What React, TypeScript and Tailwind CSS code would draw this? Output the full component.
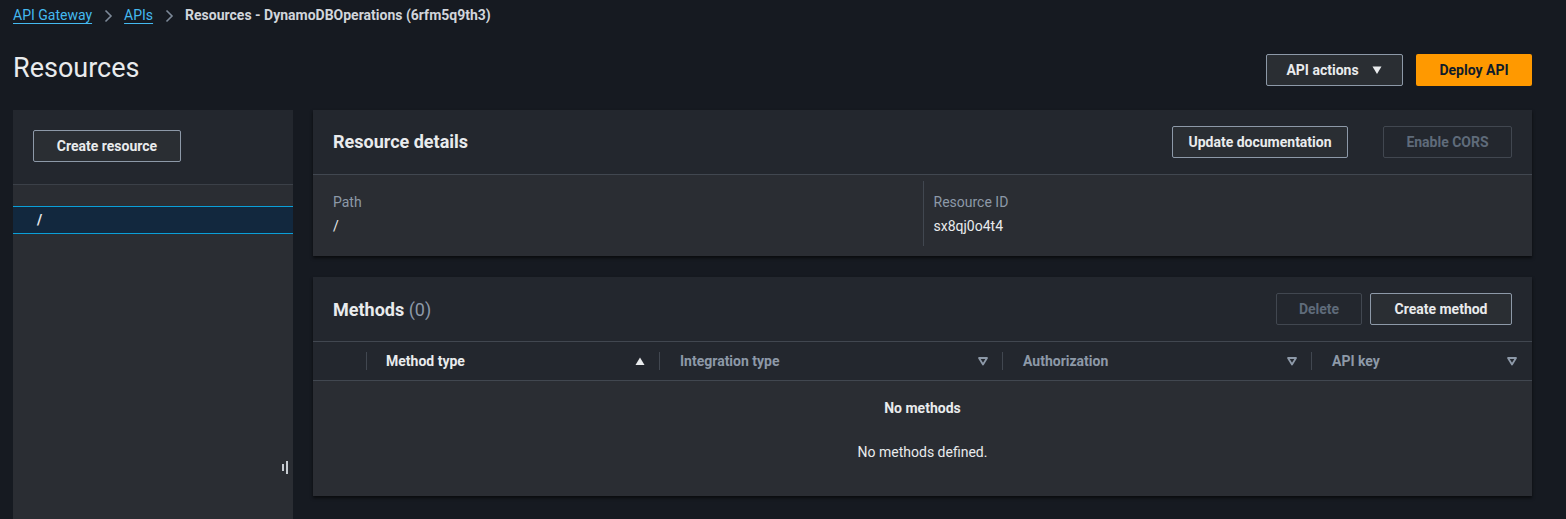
import React from "react";

const font = { fontFamily: "Roboto, 'Liberation Sans', sans-serif" };

function Chevron() {
    return (
        <svg width="16" height="16" viewBox="0 0 16 16" className="mx-[8px]">
            <path d="M5.5 2.5 L11 8 L5.5 13.5" fill="none" stroke="#7d8998" strokeWidth="1.6" />
        </svg>
    );
}

function SortDown() {
    return (
        <svg width="12" height="12" viewBox="0 0 12 12">
            <path d="M2 3 H10 L6 9.5 Z" fill="none" stroke="#8d99a8" strokeWidth="1.8" strokeLinejoin="round" />
        </svg>
    );
}

function SortUp() {
    return (
        <svg width="12" height="12" viewBox="0 0 12 12">
            <path d="M1.5 10 H10.5 L6 2.5 Z" fill="#e9ebed" />
        </svg>
    );
}

function Button({ children, disabled, className = "" }: { children: React.ReactNode; disabled?: boolean; className?: string }) {
    return (
        <button
            className={`h-[32px] px-[12px] rounded-[2px] border text-[14px] font-bold whitespace-nowrap flex items-center justify-center ${
                disabled
                    ? "border-[#414750] text-[#5f6b7a] bg-transparent"
                    : "border-[#8d99a8] text-[#e9ebed] bg-[#2a2e33]"
            } ${className}`}
        >
            {children}
        </button>
    );
}

export default function App() {
    return (
        <div style={font} className="bg-[#161a21] h-[519px] overflow-hidden text-[#e9ebed] pl-[13px] pr-[34px]">
            <nav className="h-[31px] flex items-center text-[14px]">
                <a className="text-[#44b9f0] underline underline-offset-[3px] decoration-[#44b9f0]">API Gateway</a>
                <Chevron />
                <a className="text-[#44b9f0] underline underline-offset-[3px] decoration-[#44b9f0]">APIs</a>
                <Chevron />
                <span className="font-bold text-[#d1d5db]">Resources - DynamoDBOperations (6rfm5q9th3)</span>
            </nav>

            <div className="flex items-center justify-between mt-[23px] h-[32px] mb-[24px]">
                <h1 className="text-[27px] leading-none text-[#e9ebed] -mt-[4px]">Resources</h1>
                <div className="flex gap-[13px]">
                    <Button className="w-[137px] gap-[12px]">
                        API actions
                        <svg width="12" height="12" viewBox="0 0 12 12">
                            <path d="M1.5 2.5 H10.5 L6 10 Z" fill="#e9ebed" />
                        </svg>
                    </Button>
                    <button className="h-[32px] w-[116px] rounded-[2px] bg-[#ff9900] text-[#0f1b2a] text-[14px] font-bold">
                        Deploy API
                    </button>
                </div>
            </div>

            <div className="flex gap-[20px]">
                <aside className="w-[280px] shrink-0 h-[409px] bg-[#2a2d33] flex flex-col relative">
                    <div className="h-[75px] bg-[#23272e] border-b border-[#3b4048] px-[20px] pt-[20px]">
                        <Button className="w-[148px]">Create resource</Button>
                    </div>
                    <div className="h-[21px]" />
                    <div className="h-[28px] bg-[#12283e] border-y border-[#0a9fd8] flex items-center pl-[24px] text-[14px] font-bold">
                        /
                    </div>
                    <div className="absolute right-[5px] top-[351px] flex items-center gap-[2px]">
                        <div className="w-[2px] h-[7px] bg-[#c6cbd1]" />
                        <div className="w-[2px] h-[13px] bg-[#c6cbd1]" />
                    </div>
                </aside>

                <main className="flex-1 flex flex-col gap-[21px]">
                    <section className="bg-[#2a2d33] shadow-[0_2px_3px_rgba(0,0,0,0.6)]">
                        <div className="h-[65px] bg-[#23272e] border-b border-[#414750] flex items-center justify-between px-[20px]">
                            <h2 className="text-[18px] font-bold text-[#e9ebed] -mt-[1px]">Resource details</h2>
                            <div className="flex gap-[35px]">
                                <Button className="w-[176px]">Update documentation</Button>
                                <Button disabled className="w-[129px]">Enable CORS</Button>
                            </div>
                        </div>
                        <div className="grid grid-cols-2 px-[20px] pt-[6px] pb-[10px] text-[14px] leading-[20px]">
                            <div className="pt-[11px] pb-[10px]">
                                <div className="text-[#8d99a8]">Path</div>
                                <div className="mt-[4px]">/</div>
                            </div>
                            <div className="border-l border-[#414750] pl-[10px] pt-[11px] pb-[10px]">
                                <div className="text-[#8d99a8]">Resource ID</div>
                                <div className="mt-[4px]">sx8qj0o4t4</div>
                            </div>
                        </div>
                    </section>

                    <section className="bg-[#2a2d33] shadow-[0_2px_3px_rgba(0,0,0,0.6)]">
                        <div className="h-[65px] bg-[#23272e] border-b border-[#414750] flex items-center justify-between px-[20px]">
                            <h2 className="text-[18px] font-bold text-[#e9ebed]">
                                Methods <span className="font-normal text-[#8d99a8]">(0)</span>
                            </h2>
                            <div className="flex gap-[8px]">
                                <Button disabled className="w-[86px]">Delete</Button>
                                <Button className="w-[142px]">Create method</Button>
                            </div>
                        </div>
                        <div className="h-[39px] bg-[#23272e] border-b border-[#414750] flex items-center text-[14px] font-bold">
                            <div className="w-[54px] h-[18px] border-r border-[#414750]" />
                            <div className="w-[293px] flex items-center justify-between pl-[19px] pr-[13px] h-[18px] border-r border-[#414750]">
                                <span className="text-[#e9ebed]">Method type</span>
                                <SortUp />
                            </div>
                            <div className="w-[343px] flex items-center justify-between pl-[20px] pr-[13px] h-[18px] border-r border-[#414750] text-[#8d99a8]">
                                <span>Integration type</span>
                                <SortDown />
                            </div>
                            <div className="w-[309px] flex items-center justify-between pl-[20px] pr-[13px] h-[18px] border-r border-[#414750] text-[#8d99a8]">
                                <span>Authorization</span>
                                <SortDown />
                            </div>
                            <div className="flex-1 flex items-center justify-between pl-[20px] pr-[14px] h-[18px] text-[#8d99a8]">
                                <span>API key</span>
                                <SortDown />
                            </div>
                        </div>
                        <div className="h-[115px] flex flex-col items-center text-[14px] pt-[17px]">
                            <div className="font-bold">No methods</div>
                            <div className="mt-[23px]">No methods defined.</div>
                        </div>
                    </section>
                </main>
            </div>
        </div>
    );
}
